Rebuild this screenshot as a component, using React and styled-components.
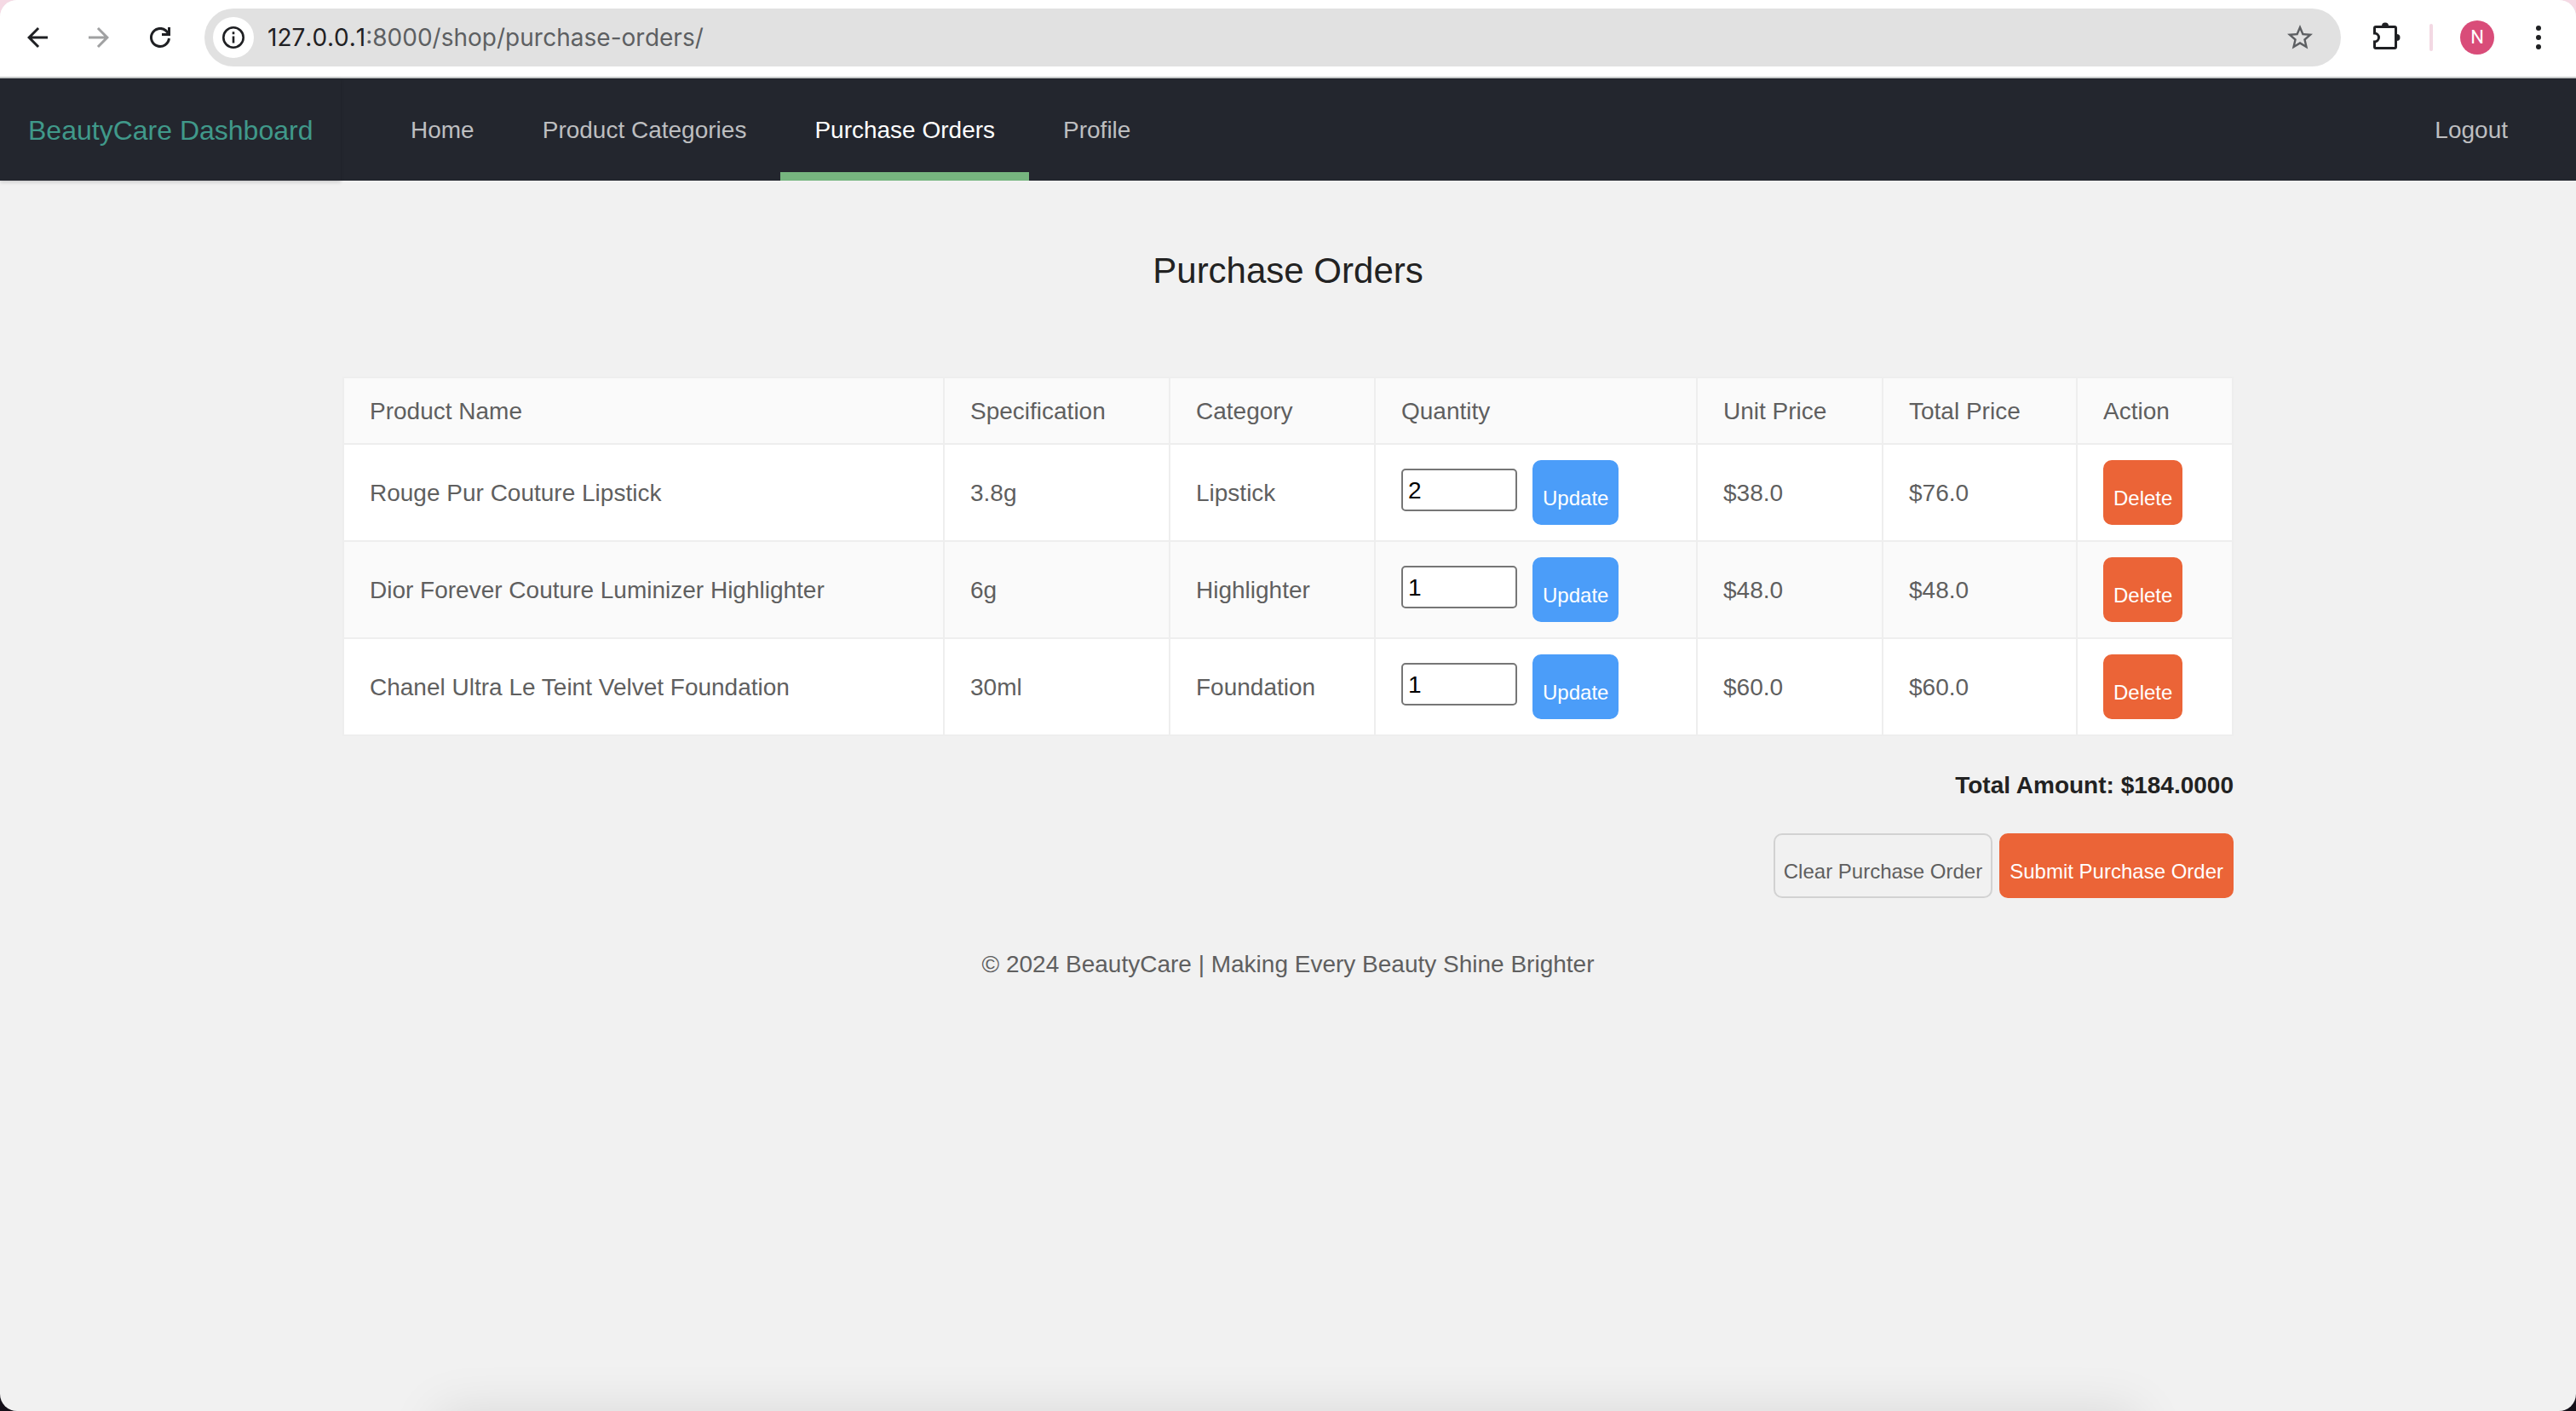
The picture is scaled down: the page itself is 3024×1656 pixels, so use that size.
import React, { useState } from "react";
import styled, { createGlobalStyle } from "styled-components";

const GlobalStyle = createGlobalStyle`
  * { box-sizing: border-box; }
  body {
    margin: 0;
    background: #151019;
    font-family: "Liberation Sans", Helvetica, Arial, sans-serif;
    font-size: 28px;
    line-height: 40px;
    color: #5f5f5f;
  }
`;

const Desktop = styled.div`
  background: linear-gradient(#f5d9e4 0 50%, #151019 50%);
`;

const Window = styled.div`
  position: relative;
  display: flex;
  flex-direction: column;
  min-height: 100vh;
  background: #f1f1f1;
  border-radius: 20px;
  overflow: hidden;

  &::after {
    content: "";
    position: absolute;
    top: 100%;
    left: 17%;
    right: 17%;
    height: 80px;
    box-shadow: 0 0 60px rgba(0, 0, 0, 0.1);
  }
`;

const Toolbar = styled.header`
  display: flex;
  align-items: center;
  height: 92px;
  padding: 0 20px 2px;
  background: #fff;
  border-bottom: 2px solid #c7caca;
`;

const ToolButton = styled.button`
  display: flex;
  align-items: center;
  justify-content: center;
  width: 48px;
  height: 48px;
  margin: 0;
  padding: 0;
  border: 0;
  border-radius: 50%;
  background: ${(p) => p.$fill || "none"};
  color: ${(p) => p.$color || "#1f2023"};
`;

const History = styled.div`
  display: flex;
  gap: 24px;
  margin-right: 28px;
`;

const AddressBar = styled.div`
  display: flex;
  flex: 1;
  align-items: center;
  height: 68px;
  padding: 0 24px 0 10px;
  border-radius: 34px;
  background: #e1e1e1;
`;

const Address = styled.div`
  flex: 1;
  padding-left: 16px;
  font-family: Inter, Roboto, sans-serif;
  font-size: 28px;
  font-kerning: none;
  color: #5d5f62;
`;

const Host = styled.span`
  color: #1f2023;
`;

const Tools = styled.div`
  display: flex;
  align-items: center;
  margin-left: 30px;
`;

const Divider = styled.span`
  width: 4px;
  height: 32px;
  margin: 0 32px 0 26px;
  border-radius: 2px;
  background: #f3d8e3;
`;

const Avatar = styled.button`
  width: 40px;
  height: 40px;
  margin: 0 28px 0 0;
  padding: 0;
  border: 0;
  border-radius: 50%;
  background: #d94c79;
  color: #fff;
  font: 22px/40px Roboto, sans-serif;
`;

const SiteHeader = styled.div`
  display: flex;
  height: 120px;
  padding-right: 40px;
  background: #23262e;
`;

const Brand = styled.div`
  width: 400px;
  padding: 2px 0 0 33px;
  font-size: 32px;
  line-height: 118px;
  color: #40998a;
  box-shadow: 0 2px 4px rgba(0, 0, 0, 0.15);
`;

const Nav = styled.nav`
  display: flex;
  flex: 1;
  padding-left: 42px;
`;

const NavLink = styled.a`
  padding: 2px 40px 0;
  line-height: 118px;
  text-decoration: none;
  color: ${(p) => (p.$active ? "#fff" : "#bdbec0")};
  box-shadow: ${(p) => (p.$active ? "inset 0 -10px #76b57f" : "none")};

  &:last-child {
    margin-left: auto;
  }
`;

const Container = styled.main`
  width: 100%;
  max-width: 2280px;
  margin: 0 auto;
  padding: 80px 30px 0;
`;

const Title = styled.h2`
  margin: 0 0 98px;
  font-size: 42px;
  font-weight: 400;
  line-height: 52px;
  text-align: center;
  color: #222;
`;

const Table = styled.table`
  width: 100%;
  table-layout: fixed;
  border-collapse: collapse;
  background: #fff;

  thead tr,
  tbody tr:nth-child(even) {
    background: #fafafa;
  }
`;

const Col = styled.col`
  width: ${(p) => p.$width};
`;

const HeadCell = styled.th`
  padding: 19px 30px 17px;
  border: 2px solid #eee;
  font-weight: 400;
  text-align: left;
`;

const Cell = styled.td`
  padding: 20px 30px 18px;
  border: 2px solid #eee;
`;

const ControlCell = styled(Cell)`
  padding: 18px 30px;
`;

const QuantityForm = styled.form`
  display: flex;
  gap: 18px;
`;

const QuantityInput = styled.input`
  width: 136px;
  height: 50px;
  margin: 10px 0 0;
  padding: 2px 6px 0;
  border: 2px solid #767676;
  border-radius: 5px;
  background: #fff;
  color: #000;
  font: inherit;
  appearance: textfield;

  &::-webkit-inner-spin-button {
    appearance: none;
  }
`;

const variants = {
  primary: "background: #4b9df9; color: #fff; border-color: #4b9df9;",
  danger: "background: #eb6437; color: #fff; border-color: #eb6437;",
  plain: "background: transparent; color: #5f5f5f; border-color: #d2d2d2;",
};

const Button = styled.button`
  display: block;
  height: 76px;
  margin: 0;
  padding: 14px 10px 0;
  border: 2px solid;
  border-radius: 10px;
  font: 24px "Liberation Sans", Helvetica, Arial, sans-serif;
  white-space: nowrap;
  ${(p) => variants[p.$variant]}
`;

const Total = styled.p`
  margin: 38px 0 36px;
  font-weight: 700;
  text-align: right;
  color: #222;
`;

const Actions = styled.div`
  display: flex;
  justify-content: flex-end;
  gap: 8px;
`;

const Footer = styled.footer`
  padding: 58px 30px;
  text-align: center;
`;

const BackIcon = () => (
  <svg width="36" height="36" viewBox="0 0 24 24" fill="currentColor">
    <path d="M20 11H7.83l5.59-5.59L12 4l-8 8 8 8 1.41-1.41L7.83 13H20v-2z" />
  </svg>
);

const ForwardIcon = () => (
  <svg width="36" height="36" viewBox="0 0 24 24" fill="currentColor">
    <path d="M4 11h12.170l-5.590-5.590L12 4l8 8-8 8-1.410-1.410L16.170 13H4v-2z" />
  </svg>
);

const ReloadIcon = () => (
  <svg width="24" height="24" viewBox="0 0 24 24" fill="none" stroke="currentColor" strokeWidth="3">
    <path d="M22.450 13A10.500 10.500 0 1 1 18.500 3.700L22 7.500" />
    <path d="M22.500 0v8.500H14" />
  </svg>
);

const InfoIcon = () => (
  <svg width="28" height="28" viewBox="0 0 28 28" fill="none" stroke="currentColor" strokeWidth="2.600">
    <circle cx="14" cy="14" r="11.700" />
    <path d="M14 12.500v8M14 7.300v2.900" />
  </svg>
);

const StarIcon = () => (
  <svg width="36" height="36" viewBox="0 0 24 24" fill="currentColor">
    <path d="M22 9.240l-7.190-.620L12 2 9.190 8.630 2 9.240l5.460 4.730L5.820 21 12 17.270 18.180 21l-1.630-7.030L22 9.240zM12 15.400l-3.760 2.270 1-4.280-3.320-2.880 4.380-.380L12 6.100l1.710 4.040 4.380.380-3.320 2.880 1 4.280L12 15.400z" />
  </svg>
);

const PuzzleIcon = () => (
  <svg width="36" height="36" viewBox="0 0 36 36">
    <path
      d="M5 5.500h22a1.500 1.500 0 0 1 1.500 1.500v22a1.500 1.500 0 0 1-1.500 1.500H5A1.500 1.500 0 0 1 3.500 29v-6a5 5 0 0 0 0-10V7A1.500 1.500 0 0 1 5 5.500z"
      fill="none"
      stroke="currentColor"
      strokeWidth="3"
    />
    <path d="M12 4.500a4 4 0 0 1 8 0zM29.500 14a4 4 0 0 1 0 8z" fill="currentColor" />
  </svg>
);

const MenuIcon = () => (
  <svg width="32" height="32" viewBox="0 0 32 32" fill="currentColor">
    <circle cx="16" cy="5" r="3" />
    <circle cx="16" cy="16" r="3" />
    <circle cx="16" cy="27" r="3" />
  </svg>
);

const columns = [
  { label: "Product Name", width: "auto" },
  { label: "Specification", width: "265px" },
  { label: "Category", width: "241px" },
  { label: "Quantity", width: "378px" },
  { label: "Unit Price", width: "218px" },
  { label: "Total Price", width: "228px" },
  { label: "Action", width: "183px" },
];

const orders = [
  { name: "Rouge Pur Couture Lipstick", spec: "3.8g", category: "Lipstick", quantity: 2, unit: "$38.0", total: "$76.0" },
  { name: "Dior Forever Couture Luminizer Highlighter", spec: "6g", category: "Highlighter", quantity: 1, unit: "$48.0", total: "$48.0" },
  { name: "Chanel Ultra Le Teint Velvet Foundation", spec: "30ml", category: "Foundation", quantity: 1, unit: "$60.0", total: "$60.0" },
];

function OrderRow({ order }) {
  const [quantity, setQuantity] = useState(order.quantity);
  return (
    <tr>
      <Cell>{order.name}</Cell>
      <Cell>{order.spec}</Cell>
      <Cell>{order.category}</Cell>
      <ControlCell>
        <QuantityForm onSubmit={(e) => e.preventDefault()}>
          <QuantityInput
            type="number"
            min="1"
            aria-label={`Quantity of ${order.name}`}
            value={quantity}
            onChange={(e) => setQuantity(e.target.value)}
          />
          <Button $variant="primary">Update</Button>
        </QuantityForm>
      </ControlCell>
      <Cell>{order.unit}</Cell>
      <Cell>{order.total}</Cell>
      <ControlCell>
        <Button type="button" $variant="danger">Delete</Button>
      </ControlCell>
    </tr>
  );
}

export default function App() {
  return (
    <Desktop>
      <GlobalStyle />
      <Window>
        <Toolbar>
          <History>
            <ToolButton aria-label="Back"><BackIcon /></ToolButton>
            <ToolButton aria-label="Forward" $color="#a0a1a2"><ForwardIcon /></ToolButton>
            <ToolButton aria-label="Reload"><ReloadIcon /></ToolButton>
          </History>
          <AddressBar>
            <ToolButton aria-label="Site information" $fill="#fff"><InfoIcon /></ToolButton>
            <Address><Host>127.0.0.1</Host>:8000/shop/purchase-orders/</Address>
            <ToolButton aria-label="Bookmark" $color="#5d5f62"><StarIcon /></ToolButton>
          </AddressBar>
          <Tools>
            <ToolButton aria-label="Extensions"><PuzzleIcon /></ToolButton>
            <Divider />
            <Avatar aria-label="Profile N">N</Avatar>
            <ToolButton aria-label="Menu"><MenuIcon /></ToolButton>
          </Tools>
        </Toolbar>

        <SiteHeader>
          <Brand>BeautyCare Dashboard</Brand>
          <Nav>
            <NavLink href="#home">Home</NavLink>
            <NavLink href="#categories">Product Categories</NavLink>
            <NavLink href="#orders" $active>Purchase Orders</NavLink>
            <NavLink href="#profile">Profile</NavLink>
            <NavLink href="#logout">Logout</NavLink>
          </Nav>
        </SiteHeader>

        <Container>
          <Title>Purchase Orders</Title>
          <Table>
            <colgroup>
              {columns.map((c) => <Col key={c.label} $width={c.width} />)}
            </colgroup>
            <thead>
              <tr>
                {columns.map((c) => <HeadCell key={c.label}>{c.label}</HeadCell>)}
              </tr>
            </thead>
            <tbody>
              {orders.map((o) => <OrderRow key={o.name} order={o} />)}
            </tbody>
          </Table>
          <Total>Total Amount: $184.0000</Total>
          <Actions>
            <Button type="button" $variant="plain">Clear Purchase Order</Button>
            <Button type="button" $variant="danger">Submit Purchase Order</Button>
          </Actions>
        </Container>
        <Footer>© 2024 BeautyCare | Making Every Beauty Shine Brighter</Footer>
      </Window>
    </Desktop>
  );
}
